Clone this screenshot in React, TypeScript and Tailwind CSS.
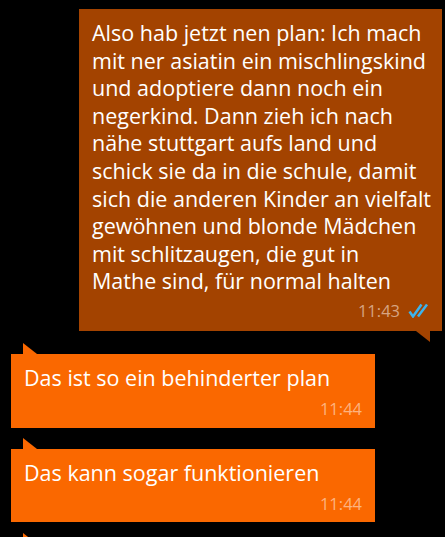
import React from "react";

const SentTail = () => (
  <svg width="14" height="11" viewBox="0 0 14 11" className="block">
    <polygon points="0,0 14,0 14,11" fill="#a34300" />
  </svg>
);

const RecvTail = () => (
  <svg width="14" height="11" viewBox="0 0 14 11" className="block">
    <polygon points="0,0 14,11 0,11" fill="#fa6800" />
  </svg>
);

const DoubleCheck = () => (
  <svg width="24" height="15" viewBox="0 0 24 15" className="block">
    <path d="M1.5 8.5 L5 13.5 L13.5 1.5" fill="none" stroke="#3cb4ee" strokeWidth="2.5" />
    <path d="M10 13.5 L19 1.5" fill="none" stroke="#3cb4ee" strokeWidth="2.5" />
  </svg>
);

const sentLines = [
  "Also hab jetzt nen plan: Ich mach",
  "mit ner asiatin ein mischlingskind",
  "und adoptiere dann noch ein",
  "negerkind. Dann zieh ich nach",
  "nähe stuttgart aufs land und",
  "schick sie da in die schule, damit",
  "sich die anderen Kinder an vielfalt",
  "gewöhnen und blonde Mädchen",
  "mit schlitzaugen, die gut in",
  "Mathe sind, für normal halten",
];

export default function App() {
  return (
    <div
      className="w-[445px] h-[537px] bg-black overflow-hidden flex flex-col"
      style={{ fontFamily: '"Open Sans", "Noto Sans", sans-serif' }}
    >
      <div className="h-[2px] overflow-hidden flex justify-end pr-[15px]">
        <div className="-mt-[9px]">
          <SentTail />
        </div>
      </div>

      <div className="mt-[9px] ml-[79px] mr-[3px] bg-[#a34300] pt-[10px] pb-[9px] pl-[13px] pr-[10px]">
        <div className="text-white text-[21.5px] leading-[27.6px] whitespace-nowrap">
          {sentLines.map((l, i) => (
            <div key={i}>{l}</div>
          ))}
        </div>
        <div className="mt-[5px] flex justify-end items-center gap-[8px] h-[22px]">
          <span className="text-[16.5px] text-[#d6a482]">11:43</span>
          <DoubleCheck />
        </div>
      </div>
      <div className="flex justify-end pr-[15px]">
        <SentTail />
      </div>

      <div className="mt-[1px] pl-[23px]">
        <RecvTail />
      </div>
      <div className="ml-[11px] w-[364px] bg-[#fa6800] pt-[10px] pb-[7px] pl-[13px] pr-[13px]">
        <div className="text-white text-[21.5px] leading-[27.6px]">
          Das ist so ein behinderter plan
        </div>
        <div className="flex justify-end h-[22px] items-center mt-[7px]">
          <span className="text-[16.5px] text-[#fdb37f]">11:44</span>
        </div>
      </div>

      <div className="mt-[10px] pl-[23px]">
        <RecvTail />
      </div>
      <div className="ml-[11px] w-[364px] bg-[#fa6800] pt-[10px] pb-[7px] pl-[13px] pr-[13px]">
        <div className="text-white text-[21.5px] leading-[27.6px]">
          Das kann sogar funktionieren
        </div>
        <div className="flex justify-end h-[22px] items-center mt-[7px]">
          <span className="text-[16.5px] text-[#fdb37f]">11:44</span>
        </div>
      </div>

      <div className="mt-[11px] pl-[23px]">
        <RecvTail />
      </div>
    </div>
  );
}
